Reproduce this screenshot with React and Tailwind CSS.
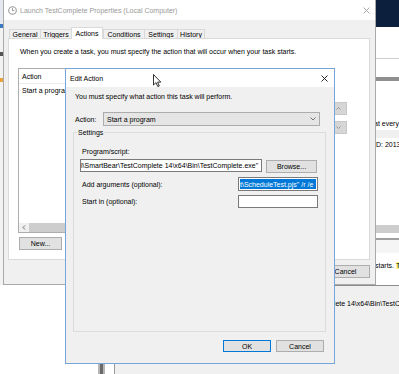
import React from "react";

// Small Windows-style push button
const WinButton = ({ label, className = "" }) => (
  <div
    className={`flex items-center justify-center bg-[#e1e1e1] border border-[#adadad] ${className}`}
  >
    {label}
  </div>
);

const ClockIcon = () => (
  <svg width="9" height="9" viewBox="0 0 9 9" className="shrink-0">
    <circle cx="4.5" cy="4.5" r="3.8" fill="#fff" stroke="#9a9a9a" strokeWidth="1.1" />
    <path d="M4.5 2.2 V4.6 H6.3" fill="none" stroke="#8a8a8a" strokeWidth="0.9" />
  </svg>
);

const CloseX = ({ color, size = 7 }) => (
  <svg width={size} height={size} viewBox="0 0 7 7" className="shrink-0">
    <path d="M0.5 0.5 L6.5 6.5 M6.5 0.5 L0.5 6.5" stroke={color} strokeWidth="0.9" />
  </svg>
);

const tabs = [
  { name: "General", w: "w-[31px]" },
  { name: "Triggers", w: "w-[31px]" },
  { name: "Actions", w: "w-[32px]", active: true },
  { name: "Conditions", w: "w-[41px]" },
  { name: "Settings", w: "w-[33px]" },
  { name: "History", w: "w-[28px]" },
];

const programPath = "l\\SmartBear\\TestComplete 14\\x64\\Bin\\TestComplete.exe\"";
const argsText = "t\\ScheduleTest.pjs\" /r /e";
const bgPath = "\\SmartBear\\TestComplete 14\\x64\\Bin\\TestCo";

// App window sitting behind the properties dialog (right edge and bottom)
const BackgroundApp = () => (
  <div className="absolute left-[114px] top-0 w-[285px] h-[374px] flex flex-col bg-white border-l border-[#9a9a9a] overflow-hidden">
    <div className="h-[27px] shrink-0 bg-[#0c1f3d]" />
    <div className="h-[31px] shrink-0" />
    <div className="h-[1px] shrink-0 bg-[#cfcfcf]" />
    <div className="h-[18px] shrink-0" />
    <div className="h-[4px] shrink-0 bg-[#8f8f8f]" />
    <div className="h-[38px] shrink-0" />
    <div className="h-[9px] shrink-0 leading-[9px] pl-[259px] whitespace-nowrap">at every</div>
    <div className="h-[2px] shrink-0" />
    <div className="h-[8px] shrink-0 bg-[#f0f0f0]" />
    <div className="h-[2px] shrink-0" />
    <div className="h-[9px] shrink-0 leading-[9px] pl-[259px] whitespace-nowrap">ID: 2013</div>
    <div className="h-[76px] shrink-0" />
    <div className="h-[8px] shrink-0 bg-[#cdcdcd]" />
    <div className="h-[5px] shrink-0" />
    <div className="h-[2px] shrink-0 bg-[#a0a0a0]" />
    <div className="h-[13px] shrink-0 bg-[#f5f5f5]" />
    <div className="h-[8px] shrink-0" />
    <div className="h-[9px] shrink-0 leading-[9px] pl-[260px] whitespace-nowrap">
      starts. <span className="bg-[#fff38a]">T</span>
    </div>
    <div className="h-[15px] shrink-0" />
    <div className="h-[1px] shrink-0 bg-[#8c8c8c]" />
    <div className="flex-1 bg-[#f0f0f0] pt-[13px]">
      <div className="leading-[9px] pl-[150px] whitespace-nowrap">{bgPath}</div>
    </div>
  </div>
);

const PropertiesWindow = () => (
  <div className="absolute left-[3px] top-0 w-[373px] h-[285px] flex flex-col bg-[#f0f0f0] border-x border-b border-[#aaaaaa]">
    {/* title bar (inactive) */}
    <div className="h-[20px] shrink-0 bg-white flex items-center pl-[4px] pr-[5px]">
      <ClockIcon />
      <span className="ml-[3px] text-[#999999] whitespace-nowrap">
        Launch TestComplete Properties (Local Computer)
      </span>
      <span className="ml-auto">
        <CloseX color="#a0a0a0" />
      </span>
    </div>

    {/* tabs */}
    <div className="flex items-end pl-[5px] mt-[7px] h-[11px] shrink-0">
      {tabs.map((t) =>
        t.active ? (
          <div
            key={t.name}
            className={`${t.w} h-[12px] -mb-[1px] relative z-10 flex items-center justify-center bg-white border-x border-t border-[#d9d9d9]`}
          >
            {t.name}
          </div>
        ) : (
          <div
            key={t.name}
            className={`${t.w} h-[9px] flex items-center justify-center bg-[#f0f0f0] border-t border-l last:border-r border-[#d9d9d9]`}
          >
            {t.name}
          </div>
        )
      )}
    </div>

    {/* tab panel */}
    <div className="ml-[4px] w-[362px] h-[222px] shrink-0 bg-white border border-[#d9d9d9] flex flex-col">
      <div className="mt-[8px] pl-[11px] leading-[9px] whitespace-nowrap">
        When you create a task, you must specify the action that will occur when your task starts.
      </div>

      <div className="flex mt-[12px]">
        {/* action list */}
        <div className="ml-[9px] w-[306px] h-[165px] border border-[#adadad] flex flex-col">
          <div className="h-[15px] flex items-center pl-[3px] border-b border-[#ececec]">Action</div>
          <div className="h-[12px] flex items-center pl-[3px] whitespace-nowrap">Start a program</div>
          <div className="flex-1" />
          <div className="h-[9px] flex">
            <div className="w-[10px] bg-[#f0f0f0] flex items-center justify-center">
              <svg width="4" height="5" viewBox="0 0 4 5">
                <path d="M3 0.5 L1 2.5 L3 4.5" fill="none" stroke="#606060" strokeWidth="0.9" />
              </svg>
            </div>
            <div className="flex-1 bg-[#cdcdcd]" />
          </div>
        </div>
        {/* move up / down */}
        <div className="ml-[5px] mt-[34px] flex flex-col gap-[6px]">
          <div className="w-[18px] h-[13px] bg-[#d6d6d6] border border-[#c8c8c8] flex items-center justify-center">
            <svg width="5" height="3" viewBox="0 0 5 3">
              <path d="M0.5 2.5 L2.5 0.5 L4.5 2.5" fill="none" stroke="#8a8a8a" strokeWidth="0.8" />
            </svg>
          </div>
          <div className="w-[18px] h-[13px] bg-[#d6d6d6] border border-[#c8c8c8] flex items-center justify-center">
            <svg width="5" height="3" viewBox="0 0 5 3">
              <path d="M0.5 0.5 L2.5 2.5 L4.5 0.5" fill="none" stroke="#8a8a8a" strokeWidth="0.8" />
            </svg>
          </div>
        </div>
      </div>

      <WinButton label="New..." className="mt-[4px] ml-[10px] w-[43px] h-[13px]" />
    </div>

    {/* bottom buttons */}
    <div className="flex justify-end gap-[5px] mt-[5px] mr-[5px]">
      <WinButton label="OK" className="w-[49px] h-[13px]" />
      <WinButton label="Cancel" className="w-[49px] h-[13px]" />
    </div>
  </div>
);

const EditActionDialog = () => (
  <div className="absolute left-[65px] top-[68px] w-[270px] h-[296px] flex flex-col bg-[#f0f0f0] border border-[#74a5dd]">
    <div className="h-[18px] shrink-0 bg-white flex items-center pl-[4px] pr-[6px]">
      <span>Edit Action</span>
      <span className="ml-auto">
        <CloseX color="#111111" />
      </span>
    </div>

    <div className="mt-[5px] pl-[9px] leading-[9px] whitespace-nowrap">
      You must specify what action this task will perform.
    </div>

    <div className="flex items-center mt-[11px] ml-[9px] h-[14px]">
      <span className="w-[28px]">Action:</span>
      <div className="w-[217px] h-[14px] bg-[#e5e5e5] border border-[#acacac] flex items-center pl-[3px] pr-[3px]">
        <span>Start a program</span>
        <svg width="6" height="4" viewBox="0 0 6 4" className="ml-auto">
          <path d="M0.5 0.5 L3 3 L5.5 0.5" fill="none" stroke="#555555" strokeWidth="0.8" />
        </svg>
      </div>
    </div>

    <fieldset className="mt-[2px] ml-[7px] w-[253px] h-[204px] border border-[#dcdcdc] flex flex-col">
      <legend className="ml-[3px] px-[1px] leading-[9px]">Settings</legend>
      <div className="mt-[10px] pl-[8px] leading-[9px]">Program/script:</div>
      <div className="flex items-start mt-[3px] pl-[6px] h-[14px]">
        <div className="w-[182px] h-[13px] bg-white border border-[#7a7a7a] flex items-center overflow-hidden whitespace-nowrap">
          {programPath}
        </div>
        <WinButton label="Browse..." className="ml-[4px] mt-[1px] w-[51px] h-[13px]" />
      </div>
      <div className="flex items-center justify-between mt-[4px] pl-[8px] pr-[7px] h-[14px]">
        <span>Add arguments (optional):</span>
        <div className="w-[80px] h-[14px] bg-white border border-[#7a7a7a] p-[1px] overflow-hidden">
          <div className="h-full bg-[#0078d7] text-white flex items-center whitespace-nowrap overflow-hidden">
            {argsText}
          </div>
        </div>
      </div>
      <div className="flex items-center justify-between mt-[4px] pl-[8px] pr-[7px] h-[13px]">
        <span>Start in (optional):</span>
        <div className="w-[80px] h-[13px] bg-white border border-[#7a7a7a]" />
      </div>
    </fieldset>

    <div className="flex justify-end gap-[5px] mt-[8px] mr-[10px]">
      <WinButton label="OK" className="w-[48px] h-[12px] !border-[#0078d7]" />
      <WinButton label="Cancel" className="w-[48px] h-[12px]" />
    </div>
  </div>
);

const Cursor = () => (
  <svg
    width="9"
    height="14"
    viewBox="0 0 9 14"
    className="absolute left-[153px] top-[74px]"
  >
    <path
      d="M0.5 0.5 L0.5 11 L3 8.6 L4.8 12.6 L6.3 12 L4.6 8.1 L7.8 8.1 Z"
      fill="#ffffff"
      stroke="#000000"
      strokeWidth="0.8"
      strokeLinejoin="round"
    />
  </svg>
);

export default function App() {
  return (
    <div className="relative w-[399px] h-[374px] overflow-hidden bg-white text-black text-[7px] leading-[9px] font-['Liberation_Sans',Arial,sans-serif]">
      <BackgroundApp />

      {/* strip of another window on the far left */}
      <div className="absolute left-0 top-0 w-[3px] h-[285px] flex flex-col bg-[#f2f2f2]">
        <div className="h-[24px] bg-[#e4e9ef]" />
        <div className="h-[4px] bg-[#3b78c0]" />
        <div className="h-[24px]" />
        <div className="h-[4px] bg-[#555555]" />
        <div className="h-[22px]" />
        <div className="h-[4px] bg-[#e5a23a]" />
      </div>

      {/* scrollbar bit under the dialogs */}
      <div className="absolute left-[98px] top-[364px] w-[7px] h-[10px] bg-[#b5b5b5] flex justify-center">
        <div className="w-[3px] h-full bg-[#6a6a6a]" />
      </div>

      <PropertiesWindow />
      <EditActionDialog />
      <Cursor />
    </div>
  );
}
